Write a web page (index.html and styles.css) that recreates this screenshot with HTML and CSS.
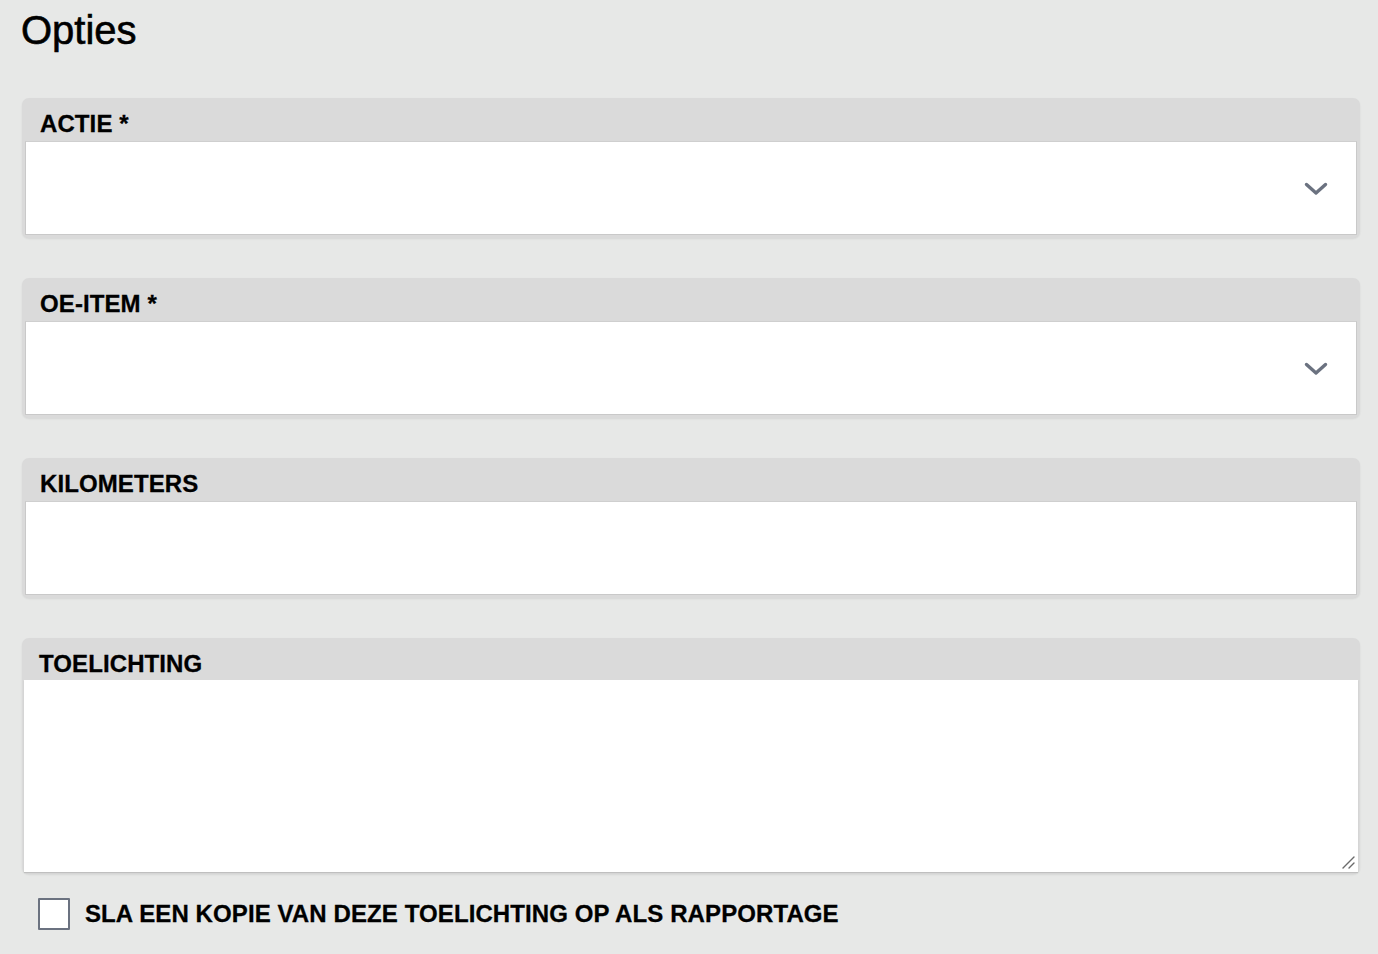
FILE: index.html
```html
<!DOCTYPE html>
<html lang="nl">
<head>
<meta charset="utf-8">
<title>Opties</title>
<link rel="stylesheet" href="styles.css">
</head>
<body>
<main class="page">
  <h1 class="title">Opties</h1>
  <div class="fields">
    <div class="card">
      <label class="card-label">ACTIE *</label>
      <div class="input select">
        <svg class="chevron" width="26" height="16" viewBox="0 0 26 16"><path d="M3.5 3.5 L13 12 L22.5 3.5" fill="none" stroke="#6b7280" stroke-width="3.4" stroke-linecap="round" stroke-linejoin="round"/></svg>
      </div>
    </div>
    <div class="card">
      <label class="card-label">OE-ITEM *</label>
      <div class="input select">
        <svg class="chevron" width="26" height="16" viewBox="0 0 26 16"><path d="M3.5 3.5 L13 12 L22.5 3.5" fill="none" stroke="#6b7280" stroke-width="3.4" stroke-linecap="round" stroke-linejoin="round"/></svg>
      </div>
    </div>
    <div class="card">
      <label class="card-label">KILOMETERS</label>
      <div class="input"></div>
    </div>
    <div class="card card-area">
      <label class="card-label">TOELICHTING</label>
      <div class="textarea">
        <svg class="grip" width="14" height="14" viewBox="0 0 14 14"><path d="M2 13 L13 2 M8 13 L13 8" stroke="#6b6b6b" stroke-width="1.4" stroke-linecap="round"/></svg>
      </div>
    </div>
  </div>
  <div class="check-row">
    <span class="checkbox"></span>
    <span class="check-label">SLA EEN KOPIE VAN DEZE TOELICHTING OP ALS RAPPORTAGE</span>
  </div>
</main>
</body>
</html>
```
FILE: styles.css
```css
html, body {
  margin: 0;
  padding: 0;
  background: #e7e8e7;
  font-family: "Liberation Sans", Arial, sans-serif;
  color: #000;
}
.page {
  padding: 0 18px 0 22px;
}
.title {
  margin: 0;
  padding-top: 7px;
  font-size: 40px;
  font-weight: 400;
  line-height: 46px;
  height: 91px;
  margin-left: -1px;
  -webkit-text-stroke: 0.6px #000;
}
.fields {
  display: flex;
  flex-direction: column;
  gap: 40px;
}
.card {
  background: #dadada;
  border-radius: 7px;
  padding: 0 3px 3px 3px;
  box-shadow: 0 1px 2px rgba(0,0,0,0.08);
}
.card-label {
  display: block;
  height: 43px;
  box-sizing: border-box;
  padding: 12px 0 0 15px;
  font-size: 24px;
  font-weight: 700;
  line-height: 28px;
  letter-spacing: 0.1px;
  -webkit-text-stroke: 0.3px #000;
}
.input {
  height: 94px;
  box-sizing: border-box;
  background: #fff;
  border: 1px solid #c9c9c9;
  border-top-color: #cfcfcf;
  position: relative;
  display: flex;
  align-items: center;
  justify-content: flex-end;
}
.chevron {
  margin-right: 27px;
  margin-top: 1px;
}
.card-area {
  padding: 0 2px 2px 2px;
}
.card-area .card-label {
  height: 42px;
}
.textarea {
  height: 192px;
  background: #fff;
  position: relative;
  box-shadow: 0 1px 1px rgba(0,0,0,0.12);
}
.grip {
  position: absolute;
  right: 3px;
  bottom: 3px;
}
.check-row {
  display: flex;
  align-items: center;
  gap: 15px;
  margin-top: 24px;
  padding-left: 16px;
}
.checkbox {
  width: 28px;
  height: 28px;
  background: #fff;
  border: 2px solid #6b7280;
  border-radius: 1px;
}
.check-label {
  font-size: 24px;
  font-weight: 700;
  line-height: 28px;
  letter-spacing: 0.1px;
  -webkit-text-stroke: 0.3px #000;
}
```
